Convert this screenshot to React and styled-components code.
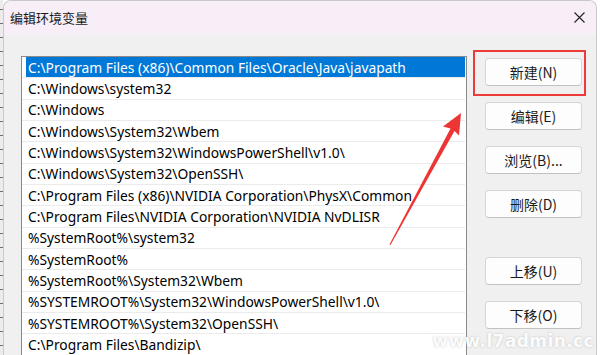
import React from 'react'
import styled, { createGlobalStyle } from 'styled-components'

const GlobalStyle = createGlobalStyle`
    html, body {
        margin:0;
        padding:0;
        background:#ffffff;
        overflow:hidden;
    }
    body {
        font-family:"Noto Sans","Noto Sans CJK SC",sans-serif;
    }
`
const Page = styled.div`
    position:relative;
    width:600px;
    height:355px;
    display:flex;
    overflow:hidden;
`
const BackStrip = styled.div`
    width:3px;
    flex:none;
    background:repeating-linear-gradient(180deg,#ececec 0 9px,#6d6d6d 9px 10px,#ececec 10px 14px);
`
const Window = styled.div`
    width:594px;
    flex:none;
    display:flex;
    flex-direction:column;
    background:#f0f0f0;
    border:1px solid #c9c9c9;
    border-bottom:none;
    border-radius:8px 8px 0 0;
    box-sizing:border-box;
    overflow:hidden;
`
const TitleBar = styled.div`
    height:33px;
    flex:none;
    display:flex;
    align-items:center;
    justify-content:space-between;
    padding:0 11px 1px 6px;
    background:#f7eef7;
    font-family:"Noto Sans CJK SC",sans-serif;
    font-size:13px;
    color:#1a1a1a;
`
const CloseIcon = styled.svg`
    width:11px;
    height:11px;
    display:block;
`
const Body = styled.div`
    flex:1;
    display:flex;
    padding:21px 14px 0 17px;
    gap:18px;
`
const List = styled.div`
    width:446px;
    flex:none;
    background:#ffffff;
    border:1px solid #8a8a8a;
    border-bottom:none;
    box-sizing:border-box;
    padding:0 1px 0 0;
`
const Row = styled.div`
    height:21.33px;
    box-sizing:border-box;
    border-bottom:1px solid #ebebeb;
    padding-left:4px;
    display:flex;
`
const RowText = styled.div`
    flex:1;
    display:flex;
    align-items:center;
    padding-left:2px;
    font-size:13.8px;
    white-space:nowrap;
    overflow:hidden;
    color:${p => p.$selected ? '#ffffff' : '#000000'};
    background:${p => p.$selected ? '#0078d7' : 'transparent'};
`
const Buttons = styled.div`
    width:97px;
    flex:none;
    display:flex;
    flex-direction:column;
    gap:16px;
    padding-top:2px;
`
const Button = styled.div`
    height:28px;
    box-sizing:border-box;
    display:flex;
    align-items:center;
    justify-content:center;
    background:#fdfdfd;
    border:1px solid #d6d6d6;
    border-bottom-color:#c2c2c2;
    border-radius:4px;
    font-family:"Noto Sans CJK SC",sans-serif;
    font-size:14px;
    color:#1b1b1b;
    margin-top:${p => p.$spaced ? '22.7px' : '0'};
`
const Highlight = styled.div`
    position:absolute;
    left:473px;
    top:50px;
    width:113px;
    height:46px;
    box-sizing:border-box;
    border:2px solid #ec3b3b;
`
const Arrow = styled.svg`
    position:absolute;
    left:0;
    top:0;
    width:600px;
    height:355px;
    pointer-events:none;
`
const Watermark = styled.div`
    position:absolute;
    right:6px;
    bottom:4px;
    font-family:"DejaVu Sans",sans-serif;
    font-weight:bold;
    font-size:17px;
    letter-spacing:0.4px;
    color:rgba(255,255,255,0.95);
    text-shadow:0 0 2px rgba(150,150,150,0.6);
`

const paths = [
    'C:\\Program Files (x86)\\Common Files\\Oracle\\Java\\javapath',
    'C:\\Windows\\system32',
    'C:\\Windows',
    'C:\\Windows\\System32\\Wbem',
    'C:\\Windows\\System32\\WindowsPowerShell\\v1.0\\',
    'C:\\Windows\\System32\\OpenSSH\\',
    'C:\\Program Files (x86)\\NVIDIA Corporation\\PhysX\\Common',
    'C:\\Program Files\\NVIDIA Corporation\\NVIDIA NvDLISR',
    '%SystemRoot%\\system32',
    '%SystemRoot%',
    '%SystemRoot%\\System32\\Wbem',
    '%SYSTEMROOT%\\System32\\WindowsPowerShell\\v1.0\\',
    '%SYSTEMROOT%\\System32\\OpenSSH\\',
    'C:\\Program Files\\Bandizip\\',
]

const buttons = [
    { label:'新建(N)' },
    { label:'编辑(E)' },
    { label:'浏览(B)...' },
    { label:'删除(D)' },
    { label:'上移(U)', spaced:true },
    { label:'下移(O)' },
]

function App(){
    return (
        <Page>
            <GlobalStyle />
            <BackStrip />
            <Window>
                <TitleBar>
                    <span>编辑环境变量</span>
                    <CloseIcon viewBox="0 0 11 11">
                        <path d="M0.5 0.5 L10.5 10.5 M10.5 0.5 L0.5 10.5" stroke="#222" strokeWidth="1.1" fill="none" />
                    </CloseIcon>
                </TitleBar>
                <Body>
                    <List>
                        {paths.map((p, i) => (
                            <Row key={i}>
                                <RowText $selected={i === 0}>{p}</RowText>
                            </Row>
                        ))}
                    </List>
                    <Buttons>
                        {buttons.map(b => (
                            <Button key={b.label} $spaced={b.spaced}>{b.label}</Button>
                        ))}
                    </Buttons>
                </Body>
            </Window>
            <Highlight />
            <Arrow viewBox="0 0 600 355">
                <polygon
                    points="461,113 459,135.5 454.5,131 390.5,245 389.5,244.5 450.5,128.5 443,126.5"
                    fill="#ee3535"
                />
            </Arrow>
            <Watermark>www.l7admin.cc</Watermark>
        </Page>
    )
}
export default App
